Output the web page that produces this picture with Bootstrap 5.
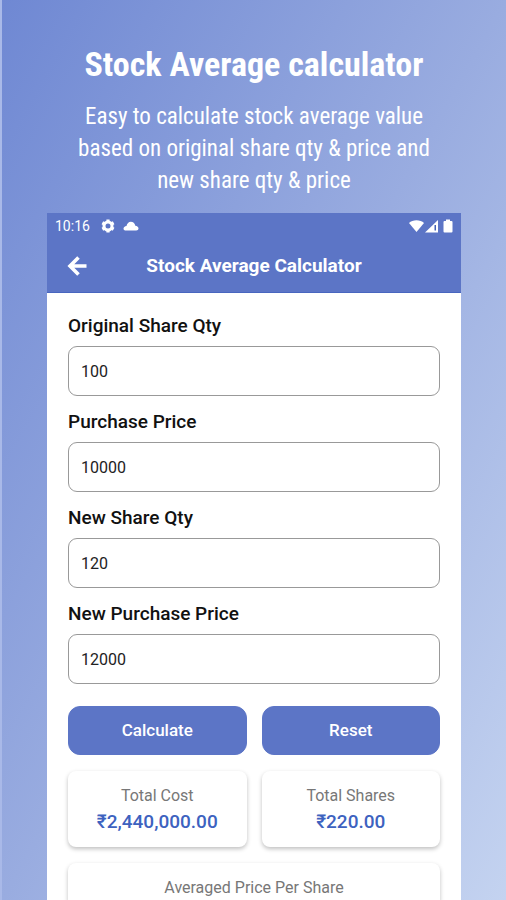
<!DOCTYPE html>
<html lang="en">
<head>
<meta charset="utf-8">
<meta name="viewport" content="width=device-width, initial-scale=1">
<title>Stock Average calculator</title>
<link href="https://cdn.jsdelivr.net/npm/bootstrap@5.3.0/dist/css/bootstrap.min.css" rel="stylesheet">
<style>
  body { font-family: Roboto, "Noto Sans", sans-serif; color: #111; }
  .promo { padding: 0 45px; background: linear-gradient(to bottom right, #6f88d3, #99ace0 50%, #c4d3f0); border-left: 2px solid #a9b9e8; }
  .promo-head { font-family: "Roboto Condensed", Roboto, sans-serif; padding: 44px 24px 16px; }
  .promo-head h1 { font-size: 34px; line-height: 40px; margin-bottom: 17px; }
  .promo-head p { font-size: 23px; line-height: 32px; }
  .app-bar { background: #5c75c6; border-bottom: 1px solid #4866bf; }
  .status { height: 26px; font-size: 14px; padding: 0 7px 0 8px; }
  .title-bar { height: 53px; padding: 0 20px; }
  .title-bar h2 { font-size: 19px; line-height: 24px; }
  .back { width: 20px; height: 24px; }
  .sheet { padding: 21px 21px 0; }
  .sheet .form-label { font-size: 19px; line-height: 24px; margin-bottom: 8px; font-weight: 500; }
  .field { margin-bottom: 14px; }
  .sheet .form-control { height: 50px; padding: 0 12px; font-size: 16px; color: #222; border-color: #999; border-radius: 9px; }
  .actions { margin-top: 22px; }
  .pair { gap: 15px; }
  .action { height: 49px; font-size: 17px; font-weight: 500; border-radius: 12px; --bs-btn-bg: #5c75c6; --bs-btn-border-color: #5c75c6; --bs-btn-color: #fff; --bs-btn-hover-bg: #4c66ba; --bs-btn-hover-color: #fff; }
  .result { border: 0; border-radius: 8px; box-shadow: 0 2px 4px rgba(0, 0, 0, .25); padding: 12px 8px; text-align: center; color: #777; font-size: 16px; line-height: 26px; }
  .result strong { color: #3d62bf; font-size: 19px; font-weight: 500; }
</style>
</head>
<body>
<main class="promo min-vh-100 d-flex flex-column">
  <header class="promo-head text-center text-white">
    <h1 class="fw-bold">Stock Average calculator</h1>
    <p class="mb-0">Easy to calculate stock average value based on original share qty &amp; price and new share qty &amp; price</p>
  </header>
  <section class="bg-white flex-grow-1 d-flex flex-column">
    <div class="app-bar text-white">
      <div class="status d-flex align-items-center">
        <span>10:16</span>
        <svg class="ms-2 me-1" width="20" height="16" viewBox="0 0 20 16" aria-hidden="true"><g transform="translate(10 8)"><circle r="4" fill="none" stroke="#fff" stroke-width="3"/><path d="M-1.600-6.500h3.200v2h-3.200zM-1.600 4.500h3.200v2h-3.200z" fill="#fff"/><path d="M-1.600-6.500h3.200v2h-3.200zM-1.600 4.500h3.200v2h-3.200z" fill="#fff" transform="rotate(60)"/><path d="M-1.600-6.500h3.200v2h-3.200zM-1.600 4.500h3.200v2h-3.200z" fill="#fff" transform="rotate(120)"/></g></svg>
        <svg width="17" height="10" viewBox="0 0 17 10" aria-hidden="true"><path d="M4 9.500C2.500 9.500 1.500 8.800 1.500 7.700c0-1.400 1.200-2.500 3-2.700C5 2.400 6.700.8 8.800.8c2.300 0 4 1.600 4.500 4 2 .2 3.200 1.300 3.200 2.800 0 1.200-1 1.900-2.300 1.900z" fill="#fff"/></svg>
        <svg class="ms-auto" width="45" height="14" viewBox="0 0 45 14" aria-hidden="true"><path d="M0 4C3.500.2 11.500.2 15 4L7.500 13z" fill="#fff"/><path d="M16 13.500L29 1v12.500z" fill="#fff"/><path d="M25.500 6h1.500v5.500h-1.500z" fill="#4361b5"/><path d="M37 2V.5h4V2h1.500q1 0 1 1v9.500q0 1-1 1h-7q-1 0-1-1V3q0-1 1-1z" fill="#fff"/></svg>
      </div>
      <div class="title-bar d-flex align-items-center">
        <button type="button" class="back btn p-0 border-0 d-flex align-items-center" aria-label="Back">
          <svg width="20" height="20" viewBox="0 0 20 20" fill="none" stroke="#fff" stroke-width="3.600" aria-hidden="true"><path d="M19.500 10H3M11.500 1.500L3 10l8.500 8.500"/></svg>
        </button>
        <h2 class="flex-grow-1 text-center fw-bold mb-0 me-3 pe-1">Stock Average Calculator</h2>
      </div>
    </div>
    <form class="sheet flex-grow-1 d-flex flex-column">
      <div class="field"><label class="form-label d-block" for="oq">Original Share Qty</label><input class="form-control" id="oq" type="text" inputmode="numeric" value="100"></div>
      <div class="field"><label class="form-label d-block" for="pp">Purchase Price</label><input class="form-control" id="pp" type="text" inputmode="numeric" value="10000"></div>
      <div class="field"><label class="form-label d-block" for="nq">New Share Qty</label><input class="form-control" id="nq" type="text" inputmode="numeric" value="120"></div>
      <div><label class="form-label d-block" for="np">New Purchase Price</label><input class="form-control" id="np" type="text" inputmode="numeric" value="12000"></div>
      <div class="actions pair d-flex mb-3">
        <button type="button" class="btn action flex-fill w-50">Calculate</button>
        <button type="reset" class="btn action flex-fill w-50">Reset</button>
      </div>
      <div class="pair d-flex mb-3">
        <div class="card result w-50"><span>Total Cost</span><strong>₹2,440,000.00</strong></div>
        <div class="card result w-50"><span>Total Shares</span><strong>₹220.00</strong></div>
      </div>
      <div class="card result rounded-bottom-0 pb-0 flex-grow-1">Averaged Price Per Share</div>
    </form>
  </section>
</main>
<script src="https://cdn.jsdelivr.net/npm/bootstrap@5.3.0/dist/js/bootstrap.bundle.min.js"></script>
</body>
</html>
